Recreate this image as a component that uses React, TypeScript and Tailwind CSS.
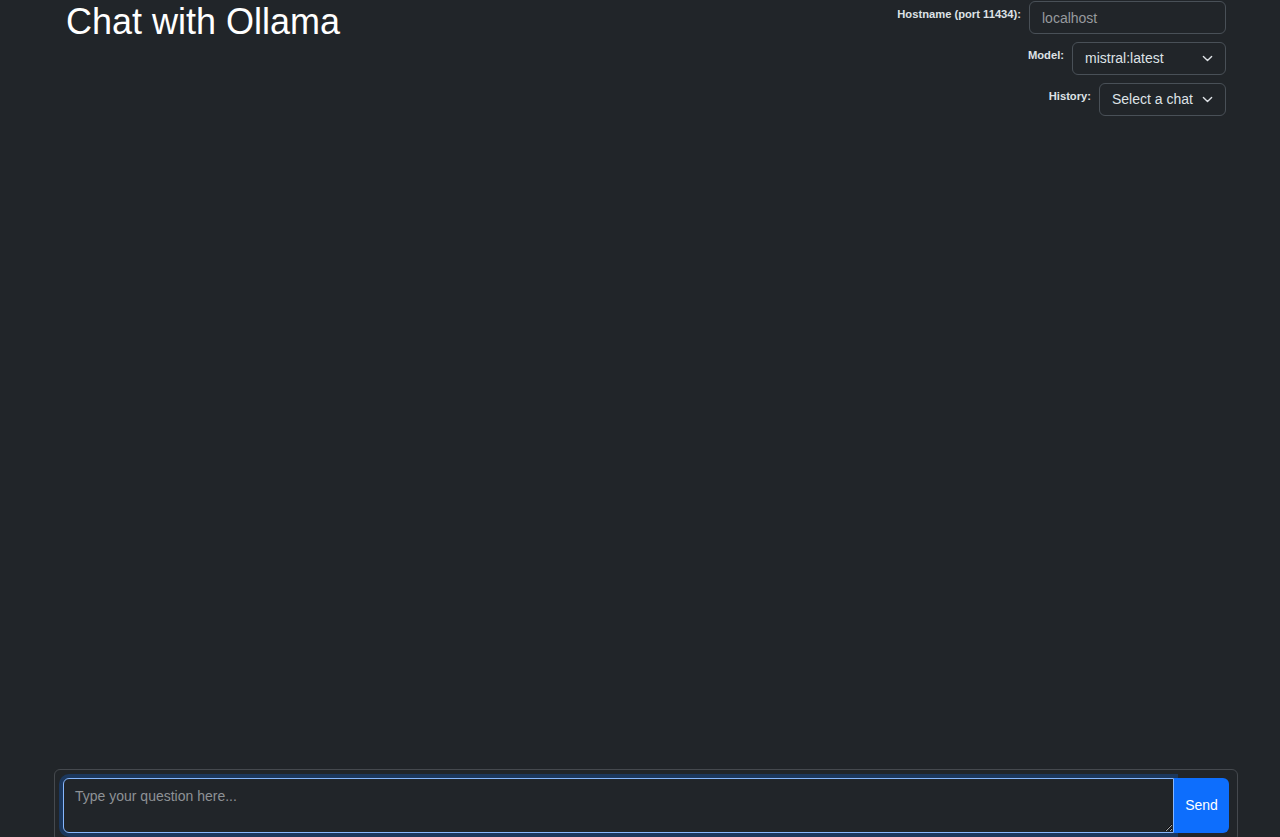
import React from "react";

function Chevron() {
  return (
    <svg width="11" height="11" viewBox="0 0 16 16" fill="none" className="shrink-0">
      <path d="m2 5 6 6 6-6" stroke="#dee2e6" strokeWidth="2" strokeLinecap="round" strokeLinejoin="round" />
    </svg>
  );
}

function SelectBox({ value, width }: { value: string; width: string }) {
  return (
    <div
      className={`${width} h-[33px] flex items-center justify-between pl-3 pr-[12px] border border-[#495057] rounded-[6px] text-[14px] text-[#dee2e6]`}
    >
      <span>{value}</span>
      <Chevron />
    </div>
  );
}

export default function App() {
  return (
    <div className="min-h-screen bg-[#212529] text-[#dee2e6] font-['Liberation_Sans',Arial,sans-serif]">
      <div className="ml-[54px] w-[1184px] h-[842px] flex flex-col">
        {/* Header */}
        <div className="flex justify-between px-3">
          <h1 className="text-[36px] leading-[1.2] font-normal text-white">Chat with Ollama</h1>
          <div className="flex flex-col items-end gap-2 pt-[1px]">
            <div className="flex items-start gap-2">
              <label className="text-[11.2px] leading-[13px] font-bold pt-[7px]">Hostname (port 11434):</label>
              <input
                className="w-[197px] h-[33px] px-3 border border-[#495057] rounded-[6px] bg-transparent text-[14px] text-[#dee2e6] placeholder:text-[#979a9e] outline-none"
                placeholder="localhost"
              />
            </div>
            <div className="flex items-start gap-2">
              <label className="text-[11.2px] leading-[13px] font-bold pt-[7px]">Model:</label>
              <SelectBox value="mistral:latest" width="w-[154px]" />
            </div>
            <div className="flex items-start gap-2">
              <label className="text-[11.2px] leading-[13px] font-bold pt-[7px]">History:</label>
              <SelectBox value="Select a chat" width="w-[127px]" />
            </div>
          </div>
        </div>

        {/* Messages */}
        <div className="flex-1" />

        {/* Input card */}
        <div className="border border-[#45494e] rounded-[6px] p-2 flex">
          <textarea
            className="flex-1 h-[55px] px-[11px] py-[7px] bg-[#212529] border border-[#86b7fe] rounded-l-[6px] text-[14px] text-[#dee2e6] placeholder:text-[#8e9296] outline-none shadow-[0_0_0_4px_rgba(13,110,253,0.25)] relative z-0"
            placeholder="Type your question here..."
          />
          <button className="w-[55px] h-[55px] bg-[#0d6efd] text-white text-[14px] rounded-r-[6px] relative z-10">
            Send
          </button>
        </div>
      </div>
    </div>
  );
}
